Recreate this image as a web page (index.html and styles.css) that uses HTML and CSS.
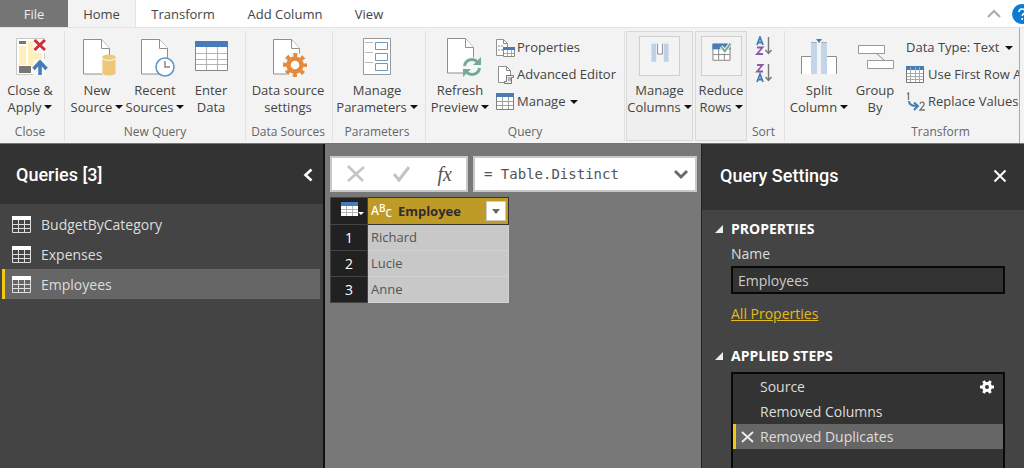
FILE: index.html
```html
<!DOCTYPE html>
<html lang="en">
<head>
<meta charset="utf-8">
<title>Query Editor</title>
<link rel="stylesheet" href="styles.css">
</head>
<body>
<svg class="defs" aria-hidden="true">
  <symbol id="page" viewBox="0 0 28 36"><path d="M.5.5h18l8 9v25.500h-26z" fill="#fff" stroke="#8f8f8f"/><path d="M18.500.5v9h8" fill="#fff" stroke="#8f8f8f"/></symbol>
  <symbol id="sheet" viewBox="0 0 18 17"><path d="M.5.5h17v16H.5z" fill="#fff" stroke="#808080"/><path d="M0 0h18v4H0z" fill="#467db8"/><path d="M1 8.500h16M1 12.500h16M6.500 4v12M12.500 4v12" stroke="#a0a0a0"/></symbol>
  <symbol id="tbl" viewBox="0 0 19 18"><path d="M.5 1.500h18v16H.5z" fill="none" stroke="#ddd"/><path d="M0 1h19v4H0z" fill="#fff"/><path d="M1 9.500h17M1 13.500h17M6.500 5v12M12.500 5v12" stroke="#ddd"/></symbol>
</svg>
<div class="app">
  <nav class="tabs">
    <button class="tab tab-file">File</button>
    <button class="tab tab-active">Home</button>
    <button class="tab tab-transform">Transform</button>
    <button class="tab tab-add">Add Column</button>
    <button class="tab tab-view">View</button>
    <button class="tab-collapse" aria-label="Collapse ribbon"><svg width="14" height="9" viewBox="0 0 14 9"><path d="M1 8l6-6 6 6" fill="none" stroke="#aaa" stroke-width="2"/></svg></button>
    <button class="help" aria-label="Help"><svg width="20" height="20" viewBox="0 0 20 20"><circle cx="10" cy="10" r="10" fill="#0d7bd6"/><path d="M7 8c0-4 6-4 6-.5 0 2.300-2.800 2-2.800 4.500M10.200 14v2" fill="none" stroke="#fff" stroke-width="1.600"/></svg></button>
  </nav>
  <div class="ribbon">
    <div class="groups">
      <section class="group g-close">
        <div class="tools">
          <button class="big"><svg width="42" height="42" viewBox="0 0 42 42"><path d="M7.500 2.500h28v36h-28z" fill="#fff" stroke="#c9c9c9"/><path d="M10 5h7v3h-7zM10 30h12v7H10z" fill="#777"/><path d="M10 10h7v19h-7zM19 5h6v24h-6zM25 17h8v12h-8z" fill="#fdf0b8"/><path d="M24 3h13v14H24z" fill="#f8f8f8"/><path d="M25.500 4l10.500 10M36 4L25.500 14" stroke="#cc2f35" stroke-width="3"/><path d="M24 23h14v17H24z" fill="#f8f8f8"/><path d="M31 39V27M24.500 33l6.500-7 6.500 7" stroke="#467db8" stroke-width="3.500" fill="none"/></svg><span>Close &amp;<br>Apply<i class="caret"></i></span></button>
        </div>
        <h3>Close</h3>
      </section>
      <section class="group g-new">
        <div class="tools">
          <button class="big"><svg width="42" height="42" viewBox="0 0 42 42"><use href="#page" x="7" y="3" width="28" height="36"/><path d="M26 20v17c0 4 14 4 14 0V20z" fill="#efc778" stroke="#f3f3f3"/><path d="M26 22c1 3 13 3 14 0" stroke="#fff" fill="none"/><ellipse cx="33" cy="21" rx="6.500" ry="2.500" fill="#efc778"/></svg><span>New<br>Source<i class="caret"></i></span></button>
          <button class="big"><svg width="42" height="42" viewBox="0 0 42 42"><use href="#page" x="7" y="3" width="28" height="36"/><circle cx="31" cy="31" r="9" fill="#fff" stroke="#6092c4" stroke-width="1.500"/><path d="M31 25v6h5" fill="none" stroke="#888" stroke-width="1.500"/></svg><span>Recent<br>Sources<i class="caret"></i></span></button>
          <button class="big enter"><svg width="42" height="42" viewBox="0 0 42 42"><path d="M5.500 5.500h32v29h-32z" fill="#fff" stroke="#888"/><path d="M5 5h33v6H5z" fill="#467db8"/><path d="M6 17.500h31M6 23.500h31M6 28.500h31M16.500 11v23M27.500 11v23" stroke="#b5b5b5"/></svg><span>Enter<br>Data</span></button>
        </div>
        <h3>New Query</h3>
      </section>
      <section class="group g-data">
        <div class="tools">
          <button class="big"><svg width="42" height="42" viewBox="0 0 42 42"><use href="#page" x="6" y="3" width="28" height="36"/><circle cx="28" cy="29" r="12.500" fill="#f6f6f6"/><circle cx="28" cy="29" r="10" fill="none" stroke="#e58a3d" stroke-width="4" stroke-dasharray="4 3.854" stroke-dashoffset="2"/><circle cx="28" cy="29" r="6.500" fill="#fff" stroke="#e58a3d" stroke-width="4.500"/></svg><span>Data source<br>settings</span></button>
        </div>
        <h3>Data Sources</h3>
      </section>
      <section class="group g-params">
        <div class="tools">
          <button class="big"><svg width="42" height="42" viewBox="0 0 42 42"><path d="M7.500 2.500h27v36h-27z" fill="#fff" stroke="#999"/><path d="M9 6.500h8M9 16.500h8M9 26.500h8" stroke="#bbb"/><path d="M19.500 6.500h12v7h-12zM19.500 17.500h12v7h-12zM19.500 27.500h12v7h-12z" fill="#fff" stroke="#6b99c8"/></svg><span>Manage<br>Parameters<i class="caret"></i></span></button>
        </div>
        <h3>Parameters</h3>
      </section>
      <section class="group g-query">
        <div class="tools">
          <button class="big"><svg width="42" height="42" viewBox="0 0 42 42"><use href="#page" x="8" y="2" width="28" height="36"/><circle cx="33" cy="31" r="10" fill="#f6f6f6"/><path d="M25.500 30a7.500 7.500 0 0 1 13-4M40.500 32a7.500 7.500 0 0 1-13 4" fill="none" stroke="#74aa94" stroke-width="3"/><path d="M42 21v8h-8zM24 41v-8h8z" fill="#74aa94"/></svg><span>Refresh<br>Preview<i class="caret"></i></span></button>
          <div class="small-list">
            <button class="small"><svg width="20" height="20" viewBox="0 0 20 20"><path d="M1.500 1.500h7l4 4v12h-11z" fill="#fff" stroke="#909090"/><path d="M8.500 1.500v4h4M3 8h2M3 12h2M6 8h2M6 12h2" fill="none" stroke="#888"/><path d="M8.500 9.500h11v9h-11z" fill="#fff" stroke="#888"/><path d="M8 9h12v3H8z" fill="#467db8"/><path d="M9 15.500h10M12.500 12v6M16.500 12v6" stroke="#aaa"/></svg>Properties</button>
            <button class="small"><svg width="20" height="20" viewBox="0 0 20 20"><path d="M3.500 1.500h8l4 4v12h-12z" fill="#fff" stroke="#909090"/><path d="M11.500 1.500v4h4" fill="none" stroke="#888"/><path d="M11.500 10.500h7v2h-2v6h-7v-2h2z" fill="#eee" stroke="#777"/><path d="M13 13h3M13 15h3" stroke="#777"/></svg>Advanced Editor</button>
            <button class="small"><svg width="20" height="20" viewBox="0 0 20 20"><use href="#sheet" x="1" y="1" width="18" height="17"/></svg>Manage<i class="caret"></i></button>
          </div>
        </div>
        <h3>Query</h3>
      </section>
      <section class="group folded g-cols">
        <button class="big"><svg class="frame" width="41" height="40" viewBox="0 0 41 40"><path d="M12 7h5v19h-5zM25 7h5v19h-5z" fill="#bdd2e8"/><path d="M18.500 7v11h5V7" fill="#fff" stroke="#888"/></svg><span>Manage<br>Columns<i class="caret"></i></span></button>
      </section>
      <section class="group folded g-rows">
        <button class="big"><svg class="frame" width="41" height="40" viewBox="0 0 41 40"><path d="M11.500 7.500h18v17h-18z" fill="#fff" stroke="#808080"/><path d="M11 7h19v6H11z" fill="#467db8"/><path d="M12 18.500h17M17.500 13v11M23.500 13v11" stroke="#808080"/><path d="M20 10l4 5 6-8" fill="none" stroke="#f3f3f3" stroke-width="4"/><path d="M20 10l4 5 6-8" fill="none" stroke="#74aa94" stroke-width="2"/></svg><span>Reduce<br>Rows<i class="caret"></i></span></button>
      </section>
      <section class="group g-sort">
        <div class="tools sort-tools">
          <button class="sort" aria-label="Sort ascending"><svg width="18" height="20" viewBox="0 0 18 20"><path d="M2 9l3-8 3 8M3 6.500h4" fill="none" stroke="#467db8" stroke-width="1.800"/><path d="M2 11.500h5.500L2 18h6" fill="none" stroke="#8e5aa8" stroke-width="1.800"/><path d="M13.500 1v16M10.500 14l3 3.500 3-3.500" fill="none" stroke="#777" stroke-width="1.400"/></svg></button>
          <button class="sort" aria-label="Sort descending"><svg width="18" height="20" viewBox="0 0 18 20"><path d="M2 2h5.500L2 8.500h6" fill="none" stroke="#8e5aa8" stroke-width="1.800"/><path d="M2 19l3-8 3 8M3 16.500h4" fill="none" stroke="#467db8" stroke-width="1.800"/><path d="M13.500 1v16M10.500 14l3 3.500 3-3.500" fill="none" stroke="#777" stroke-width="1.400"/></svg></button>
        </div>
        <h3>Sort</h3>
      </section>
      <section class="group g-transform">
        <div class="tools">
          <button class="big"><svg width="42" height="42" viewBox="0 0 42 42"><path d="M3.500 38V20.500h10V38M28.500 38V20.500h10V38" fill="#fff" stroke="#8c8c8c"/><path d="M13 6h6v32h-6zM23 6h6v32h-6z" fill="#c2d5e9"/><path d="M13.500 6.500h5M23.500 6.500h5" stroke="#aaa"/><path d="M18 3h6l-3 4z" fill="#467db8"/></svg><span>Split<br>Column<i class="caret"></i></span></button>
          <button class="big groupby"><svg width="42" height="42" viewBox="0 0 42 42"><path d="M22 17l8 7" stroke="#888"/><path d="M4.500 9.500h26v8h-26zM13.500 24.500h26v8h-26z" fill="#fff" stroke="#999"/></svg><span>Group<br>By</span></button>
          <div class="small-list">
            <button class="small">Data Type: Text<i class="caret"></i></button>
            <button class="small"><svg width="20" height="20" viewBox="0 0 20 20"><path d="M.5 1.500h17v16H.5z" fill="#fff" stroke="#777"/><path d="M0 1h18v4H0z" fill="#467db8"/><path d="M1 8.500h16M1 11.500h16M1 14.500h16M4.500 2v15M9.500 2v15M13.500 2v15" stroke="#aaa"/></svg>Use First Row A</button>
            <button class="small"><svg width="20" height="20" viewBox="0 0 20 20"><path d="M1 2l1.500-1v7M14 12c1-3 5-2 4 1l-4 5h5" fill="none" stroke="#777" stroke-width="1.300"/><path d="M3 9c0 4 3 5 8 5M8 10.500l4 3.500-4 4" fill="none" stroke="#467db8" stroke-width="2"/></svg>Replace Values</button>
          </div>
        </div>
        <h3>Transform</h3>
      </section>
    </div>
  </div>
  <main class="workspace">
    <aside class="queries">
      <header class="pane-head"><h2>Queries [3]</h2><button class="bare" aria-label="Collapse"><svg width="10" height="14" viewBox="0 0 10 14"><path d="M8.500 1.500L2.500 7l6 5.500" fill="none" stroke="#fff" stroke-width="2.600"/></svg></button></header>
      <div class="query-list">
        <button class="query"><svg width="19" height="18"><use href="#tbl"/></svg>BudgetByCategory</button>
        <button class="query"><svg width="19" height="18"><use href="#tbl"/></svg>Expenses</button>
        <button class="query selected"><svg width="19" height="18"><use href="#tbl"/></svg>Employees</button>
      </div>
    </aside>
    <section class="preview">
      <div class="formula-row">
        <div class="formula-tools">
          <button class="bare" aria-label="Cancel"><svg width="20" height="18" viewBox="0 0 20 18"><path d="M2 1l15 15M18 2L2 16" stroke="#c4c4c4" stroke-width="2.600"/></svg></button>
          <button class="bare" aria-label="Commit"><svg width="20" height="18" viewBox="0 0 20 18"><path d="M2 9l5 6L17 2" fill="none" stroke="#c4c4c4" stroke-width="3"/></svg></button>
          <button class="bare fx">fx</button>
        </div>
        <div class="formula-box">
          <input class="formula" aria-label="Formula" value="= Table.Distinct">
          <button class="bare" aria-label="Expand"><svg width="16" height="11" viewBox="0 0 16 11"><path d="M2 2l6 6 6-6" fill="none" stroke="#6b6b6b" stroke-width="3"/></svg></button>
        </div>
      </div>
      <table class="grid">
        <thead><tr>
          <th class="corner"><button class="bare" aria-label="Table menu"><svg width="24" height="16" viewBox="0 0 24 16"><path d="M0 1h17v14H0z" fill="#fff"/><path d="M0 1h17v4H0z" fill="#467db8"/><path d="M0 8.500h17M0 11.500h17M5.500 5v10M11.500 5v10" stroke="#b5b5b5"/><path d="M17 11h6l-3 3z" fill="#fff"/></svg></button></th>
          <th class="colhead"><div><span class="abc">A<sup>B</sup><sub>C</sub></span><span class="colname">Employee</span><button class="filter" aria-label="Filter"><i></i></button></div></th>
        </tr></thead>
        <tbody>
          <tr><th>1</th><td>Richard</td></tr>
          <tr><th>2</th><td>Lucie</td></tr>
          <tr><th>3</th><td>Anne</td></tr>
        </tbody>
      </table>
    </section>
    <aside class="settings">
      <header class="pane-head"><h2>Query Settings</h2><button class="bare" aria-label="Close"><svg width="14" height="14" viewBox="0 0 14 14"><path d="M1.500 1.500l11 11M12.500 1.500l-11 11" stroke="#fff" stroke-width="2"/></svg></button></header>
      <div class="settings-body">
        <h3 class="sec">PROPERTIES</h3>
        <label for="qname">Name</label>
        <input id="qname" value="Employees">
        <a href="#all">All Properties</a>
        <h3 class="sec sec-steps">APPLIED STEPS</h3>
        <ul class="steps">
          <li><span class="del"></span>Source<button class="bare gear" aria-label="Step settings"><svg width="14" height="14" viewBox="0 0 14 14"><path d="M0 7h14M3.500 1l7 12M10.500 1l-7 12" stroke="#fff" stroke-width="3"/><circle cx="7" cy="7" r="3.500" fill="#333" stroke="#fff" stroke-width="3"/></svg></button></li>
          <li><span class="del"></span>Removed Columns</li>
          <li class="selected"><button class="bare del" aria-label="Delete step"><svg width="13" height="12" viewBox="0 0 13 12"><path d="M1 1l11 10M12 1L1 11" stroke="#eee" stroke-width="1.800"/></svg></button>Removed Duplicates</li>
        </ul>
      </div>
    </aside>
  </main>
</div>
</body>
</html>
```
FILE: styles.css
```css
* { box-sizing: border-box; }
body { margin: 0; font: 13px/17px "Open Sans", "Noto Sans", sans-serif; color: #444; overflow: hidden; }
button { font: inherit; color: inherit; background: none; border: 0; padding: 0; margin: 0; }
h2, h3 { margin: 0; font-weight: 400; }
svg { display: block; flex: none; }
.defs { position: absolute; width: 0; height: 0; }
.app { display: flex; flex-direction: column; height: 100vh; background: #f3f3f3; }

.tabs { display: flex; flex: none; height: 28px; background: #fff; border-bottom: 1px solid #e3e3e3; overflow: hidden; }
.tab { height: 28px; }
.tab-file { width: 68px; background: #757575; color: #eee; }
.tab-active { width: 68px; background: #f3f3f3; border-right: 1px solid #e3e3e3; }
.tab-transform { width: 94px; }
.tab-add { width: 110px; }
.tab-view { width: 58px; }
.tab-collapse { margin-left: auto; padding: 0 11px; }
.help { width: 12px; overflow: hidden; }

.ribbon { flex: none; padding: 0 4px 0 0; border-bottom: 1px solid #777; }
.groups { display: flex; padding-top: 3px; padding-bottom: 2px; overflow: hidden; border-right: 1px solid #aaa; }
.group { display: flex; flex-direction: column; flex: none; border-right: 1px solid #e1e1e1; }
.group h3 { text-align: center; font-size: 12px; line-height: 18px; padding-top: 7px; color: #666; white-space: nowrap; }
.tools { display: flex; justify-content: center; }
.big { display: flex; flex-direction: column; align-items: center; gap: 4px; width: 58px; height: 85px; padding-top: 5px; white-space: nowrap; }
.big span { display: block; }
.caret { display: inline-block; margin-left: 3px; vertical-align: 3px; border: 4px solid transparent; border-top: 4px solid #111; border-bottom: 0; }
.g-close { width: 65px; padding-right: 4px; }
.g-new { width: 181px; }
.g-new .tools { justify-content: flex-start; padding-left: 3px; }
.enter { width: 54px; }
.g-data { width: 87px; padding-right: 4px; padding-left: 2px; }
.g-params { width: 93px; padding-right: 4px; }
.g-query { width: 199px; margin-right: 1px; }
.g-query .tools, .g-transform .tools { justify-content: flex-start; padding-left: 5px; }
.small-list { display: flex; flex-direction: column; padding-top: 3px; padding-left: 6px; }
.small { display: flex; align-items: center; gap: 2px; height: 27px; white-space: nowrap; }
.folded { border: 1px solid #d9d9d9; align-items: center; background: #efefef; }
.folded .big { padding-top: 4px; gap: 6px; }
.frame { border: 1px solid #cfcfcf; background: #f3f3f3; }
.g-cols { width: 67px; margin-right: 2px; }
.g-rows { width: 52px; }
.g-sort { width: 38px; padding-right: 4px; }
.sort-tools { flex-direction: column; align-items: center; height: 85px; justify-content: flex-start; padding-top: 5px; gap: 7px; }
.g-transform { width: 312px; }
.groupby { width: 54px; }
.g-transform .small-list { padding-left: 4px; }

.workspace { flex: 1; display: grid; grid-template-columns: 325px minmax(0, 1fr) 323px; min-height: 0; background: #787878; }
.queries, .settings { background: #444; color: #ddd; overflow: hidden; }
.queries { border-right: 2px solid #111; }
.settings { border-left: 1px solid #222; font-size: 14px; }
.pane-head { display: flex; align-items: center; justify-content: space-between; background: #333; color: #fff; }
.queries .pane-head { height: 60px; padding: 2px 10px 0 16px; }
.settings .pane-head { height: 66px; padding: 0 17px 2px 18px; }
.pane-head h2 { font: 500 18px/22px Roboto, sans-serif; }
.query-list { padding: 5px 3px 0 2px; font-size: 14px; }
.query { display: flex; align-items: center; gap: 10px; width: 100%; height: 30px; padding-left: 7px; border-left: 3px solid transparent; }
.selected { background: #666; border-left-color: #f2c811; }

.preview { padding: 12px 4px 0 5px; min-width: 0; }
.formula-row { display: flex; gap: 5px; height: 36px; }
.formula-tools, .formula-box { display: flex; align-items: center; background: #fff; border: 2px solid #c8c8c8; }
.formula-tools { width: 138px; justify-content: space-between; padding: 0 14px; }
.fx { font: italic 20px/24px "Liberation Serif", serif; color: #555; }
.formula-box { flex: 1; min-width: 0; padding: 0 6px 0 9px; }
.formula { flex: 1; min-width: 0; border: 0; padding: 0; font: 14px/20px "DejaVu Sans Mono", monospace; color: #555; }
.grid { margin-top: 5px; width: 179px; border-collapse: collapse; table-layout: fixed; border: 1px solid #444; }
.grid th, .grid td { padding: 0; height: 26px; border: 1px solid #d2d2d2; font-weight: 400; }
.grid thead th { height: 27px; }
.grid tbody th { background: #212121; color: #fff; border-color: #444; font-size: 14px; }
.grid td { background: #c8c8c8; color: #555; padding-left: 3px; }
.grid .corner { width: 37px; background: #212121; border-color: #444; padding-left: 7px; }
.grid .colhead { background: #be9a27; border-color: #333; color: #2d2d2d; }
.colhead div { display: flex; align-items: center; padding: 0 2px 0 3px; }
.abc { color: #fff; font-size: 12px; line-height: 18px; font-weight: 600; }
.abc sup, .abc sub { font-size: 10px; line-height: 0; }
.abc sup { vertical-align: 3px; }
.abc sub { vertical-align: -2px; }
.colname { font-weight: 700; margin-left: 6px; }
.filter { display: grid; place-items: center; width: 20px; height: 20px; margin-left: auto; background: #fff; border: 1px solid #ccc; }
.filter i { border: 4px solid transparent; border-top: 5px solid #666; border-bottom: 0; }

.settings-body { display: flex; flex-direction: column; align-items: flex-start; padding: 9px 19px 0 29px; }
.sec { position: relative; font-size: 14px; line-height: 20px; font-weight: 700; color: #fff; }
.sec::before { content: ""; position: absolute; left: -16px; top: 6px; border-left: 8px solid transparent; border-bottom: 8px solid #eee; }
.settings-body label { line-height: 20px; margin-top: 5px; }
.settings-body input { width: 100%; height: 28px; margin-top: 2px; padding: 0 5px; background: #333; border: 2px solid #080808; color: #ccc; font: inherit; }
.settings-body a { color: #e3bb18; line-height: 20px; margin-top: 10px; }
.sec-steps { margin-top: 22px; }
.steps { list-style: none; width: 100%; height: 120px; margin: 6px 0 0; padding: 0; background: #333; border: 2px solid #080808; }
.steps li { display: flex; align-items: center; height: 25px; padding-right: 9px; border-left: 3px solid transparent; }
.steps li.selected { border-left-color: #f2c811; }
.del { width: 24px; padding-left: 5px; }
.gear { margin-left: auto; }
```
